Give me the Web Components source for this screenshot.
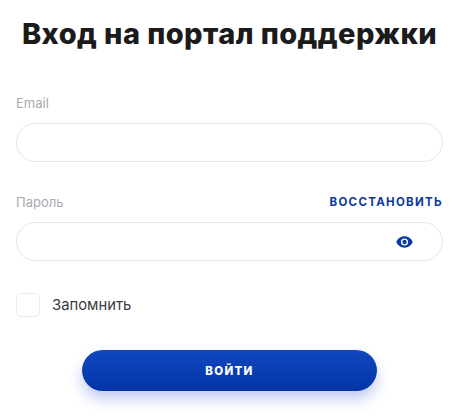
<!DOCTYPE html>
<html lang="ru">
<head>
<meta charset="utf-8">
<title>Вход</title>
<style>
  html, body { margin: 0; background: #fff; }
  body { font-family: Inter, "Noto Sans", sans-serif; }
</style>
</head>
<body>
<login-form>
  <form-field label="Email" style="margin-bottom: 30px"></form-field>
  <form-field label="Пароль" style="margin-bottom: 32px">
    <a slot="aside" style="font: 700 11.5px Inter, sans-serif; letter-spacing: 1.3px; color: #0b3a9c; text-decoration: none">ВОССТАНОВИТЬ</a>
    <svg slot="icon" width="17" height="12" viewBox="0 0 18 12" style="display:block">
      <path fill="#0a3aa6" fill-rule="evenodd" d="M9 0C5 0 1.8 2.4.3 6 1.8 9.6 5 12 9 12s7.2-2.4 8.7-6C16.2 2.4 13 0 9 0Zm0 9.8A3.8 3.8 0 1 1 9 2.2a3.8 3.8 0 0 1 0 7.6Z"/>
      <circle cx="9" cy="6" r="2.3" fill="#0a3aa6"/>
    </svg>
  </form-field>
  <check-box style="margin-bottom: 33px">Запомнить</check-box>
  <submit-button>ВОЙТИ</submit-button>
</login-form>

<script>
class LoginForm extends HTMLElement {
  constructor() {
    super();
    this.attachShadow({ mode: 'open' }).innerHTML = `
      <style>
        :host { display: block; width: 461px; height: 420px; box-sizing: border-box; padding: 16px 18px 0 16px; overflow: hidden; }
        h1 { margin: 0 0 41px; text-align: center; font: 800 29px/36px Inter, "Noto Sans", sans-serif; letter-spacing: .42px; color: #1b1b1b; white-space: nowrap; }
      </style>
      <h1>Вход на портал поддержки</h1>
      <slot></slot>`;
  }
}

class FormField extends HTMLElement {
  constructor() {
    super();
    this.attachShadow({ mode: 'open' }).innerHTML = `
      <style>
        :host { display: block; }
        .head { display: flex; justify-content: space-between; align-items: center; height: 20px; margin-bottom: 10px; }
        .label { font-size: 13px; color: #a9a9b0; }
        .box { display: flex; justify-content: flex-end; align-items: center; box-sizing: border-box; height: 39px; padding-right: 29px; border: 1px solid #e4e4e6; border-radius: 20px; background: #fff; }
      </style>
      <div class="head"><span class="label"></span><slot name="aside"></slot></div>
      <div class="box"><slot name="icon"></slot></div>`;
    this.shadowRoot.querySelector('.label').textContent = this.getAttribute('label');
  }
}

class CheckBox extends HTMLElement {
  constructor() {
    super();
    this.attachShadow({ mode: 'open' }).innerHTML = `
      <style>
        :host { display: flex; align-items: center; gap: 12px; font-size: 14.8px; color: #3a3a42; }
        .tick { box-sizing: border-box; width: 24px; height: 24px; border: 1px solid #ebebed; border-radius: 5px; }
      </style>
      <span class="tick"></span><slot></slot>`;
  }
}

class SubmitButton extends HTMLElement {
  constructor() {
    super();
    this.attachShadow({ mode: 'open' }).innerHTML = `
      <style>
        :host { display: flex; justify-content: center; }
        button { width: 295px; height: 41px; padding: 0; border: 0; border-radius: 21px; color: #fff;
          font: 800 11.5px Inter, sans-serif; letter-spacing: 1.3px;
          background: linear-gradient(#1148bf, #0234a6);
          box-shadow: 0 8px 14px rgba(30, 70, 200, .28); }
      </style>
      <button type="button"><slot></slot></button>`;
  }
}

customElements.define('login-form', LoginForm);
customElements.define('form-field', FormField);
customElements.define('check-box', CheckBox);
customElements.define('submit-button', SubmitButton);
</script>
</body>
</html>
